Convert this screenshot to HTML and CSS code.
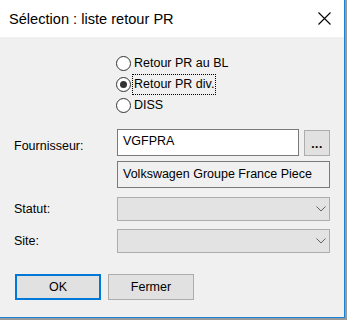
FILE: index.html
```html
<!DOCTYPE html>
<html lang="fr">
<head>
<meta charset="utf-8">
<title>Sélection : liste retour PR</title>
<link rel="stylesheet" href="styles.css">
</head>
<body>
<div class="window">
  <div class="titlebar">
    <span class="title">Sélection : liste retour PR</span>
    <svg class="close" width="13" height="13" viewBox="0 0 13 13"><path d="M0.5 0.5 L12.5 12.5 M12.5 0.5 L0.5 12.5" stroke="#000" stroke-width="1.1" fill="none"/></svg>
  </div>
  <div class="content">
    <div class="radios">
      <div class="radio"><span class="circle"></span><span class="rlabel">Retour PR au BL</span></div>
      <div class="radio"><span class="circle checked"></span><span class="rlabel focus">Retour PR div.</span></div>
      <div class="radio"><span class="circle"></span><span class="rlabel">DISS</span></div>
    </div>
    <div class="form">
      <div class="label label-four">Fournisseur:</div>
      <div class="fields">
        <div class="line">
          <div class="input">VGFPRA</div>
          <div class="dots">...</div>
        </div>
        <div class="readonly">Volkswagen Groupe France Piece</div>
      </div>
      <div class="label label-combo">Statut:</div>
      <div class="combo">
        <svg class="chev" width="10" height="6" viewBox="0 0 10 6"><path d="M0.5 0.5 L5 5 L9.5 0.5" stroke="#606060" stroke-width="1" fill="none"/></svg>
      </div>
      <div class="label label-combo">Site:</div>
      <div class="combo">
        <svg class="chev" width="10" height="6" viewBox="0 0 10 6"><path d="M0.5 0.5 L5 5 L9.5 0.5" stroke="#606060" stroke-width="1" fill="none"/></svg>
      </div>
    </div>
    <div class="buttons">
      <div class="btn btn-default">OK</div>
      <div class="btn">Fermer</div>
    </div>
  </div>
</div>
</body>
</html>
```
FILE: styles.css
```css
html, body {
  margin: 0;
  padding: 0;
  background: #9a9a9a;
}
body {
  width: 347px;
  height: 320px;
  overflow: hidden;
  font-family: "Liberation Sans", Arial, sans-serif;
  font-size: 12.5px;
  color: #000;
}
.window {
  width: 344px;
  height: 317px;
  background: #f0f0f0;
  border-right: 1px solid #1883d7;
  border-bottom: 1px solid #1883d7;
  display: flex;
  flex-direction: column;
}
.titlebar {
  height: 37px;
  background: #fff;
  display: flex;
  align-items: center;
  justify-content: space-between;
  padding: 0 13px 0 9px;
  flex: none;
}
.title {
  font-size: 14.6px;
  margin-top: 1px;
}
.close {
  display: block;
}
.content {
  padding: 16px 14px 0 14px;
  display: flex;
  flex-direction: column;
}
.radios {
  margin-left: 102px;
  display: flex;
  flex-direction: column;
}
.radio {
  height: 21px;
  display: flex;
  align-items: center;
}
.circle {
  width: 13px;
  height: 13px;
  border: 1px solid #333;
  border-radius: 50%;
  background: #fff;
  position: relative;
  flex: none;
}
.circle.checked::after {
  content: "";
  position: absolute;
  left: 3px;
  top: 3px;
  width: 7px;
  height: 7px;
  border-radius: 50%;
  background: #333;
}
.rlabel {
  margin-left: 1px;
  padding: 2px 1px 3px 1px;
  border: 1px dotted transparent;
  line-height: 14px;
}
.rlabel.focus {
  border-color: #000;
}
.form {
  margin-top: 13px;
  display: grid;
  grid-template-columns: 103px 213px;
  row-gap: 8px;
  align-items: center;
}
.label-four {
  align-self: start;
  padding-top: 10px;
}
.fields {
  display: flex;
  flex-direction: column;
  gap: 5px;
  padding-bottom: 1px;
}
.line {
  display: flex;
  gap: 5px;
}
.input {
  width: 182px;
  height: 27px;
  box-sizing: border-box;
  border: 1px solid #7a7a7a;
  background: #fff;
  padding: 4px 5px 0 5px;
}
.dots {
  width: 26px;
  height: 26px;
  box-sizing: border-box;
  border: 1px solid #adadad;
  background: #e1e1e1;
  font-weight: bold;
  font-size: 12px;
  text-align: center;
  line-height: 26px;
  letter-spacing: 0.5px;
  margin-top: 1px;
}
.readonly {
  height: 27px;
  box-sizing: border-box;
  border: 1px solid #7a7a7a;
  background: #f0f0f0;
  padding: 5px 5px 0 5px;
}
.combo {
  height: 24px;
  box-sizing: border-box;
  border: 1px solid #adadad;
  background: #e3e3e3;
  display: flex;
  align-items: center;
  justify-content: flex-end;
  padding-right: 3px;
}
.chev {
  display: block;
}
.buttons {
  margin-top: 21px;
  margin-left: 1px;
  display: flex;
  gap: 7px;
}
.btn {
  width: 86px;
  height: 26px;
  box-sizing: border-box;
  border: 1px solid #adadad;
  background: #e1e1e1;
  display: flex;
  align-items: center;
  justify-content: center;
}
.btn-default {
  border: 2px solid #0078d7;
}
```
